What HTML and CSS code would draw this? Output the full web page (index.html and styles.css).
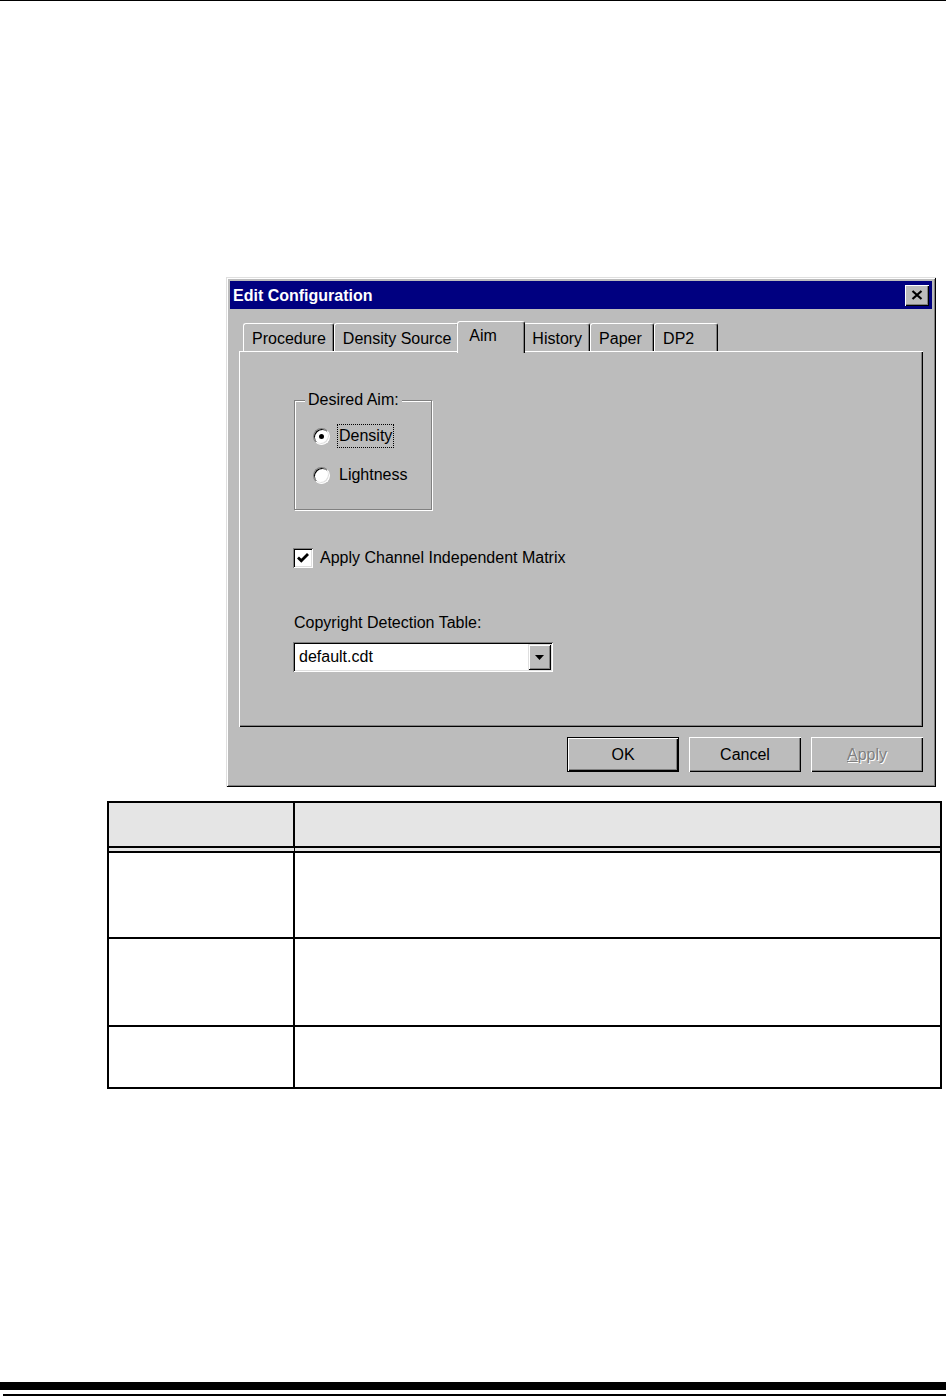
FILE: index.html
```html
<!DOCTYPE html>
<html>
<head>
<meta charset="utf-8">
<title>Edit Configuration</title>
<link rel="stylesheet" href="styles.css">
</head>
<body>
<div class="page">
  <div class="rule-top"></div>
  <div class="dialog">
    <div class="titlebar">
      <span class="title">Edit Configuration</span>
      <div class="close-btn">
        <svg width="12" height="10" viewBox="0 0 12 10"><path d="M1.5 1 L10.5 9 M10.5 1 L1.5 9" stroke="#000" stroke-width="2.2" fill="none"/></svg>
      </div>
    </div>
    <div class="dlg-body">
      <div class="tabs">
        <div class="tab">Procedure</div>
        <div class="tab">Density Source</div>
        <div class="tab active">Aim</div>
        <div class="tab">History</div>
        <div class="tab">Paper</div>
        <div class="tab">DP2</div>
      </div>
      <div class="panel">
        <fieldset class="group">
          <legend>Desired Aim:</legend>
          <div class="radio-row">
            <span class="radio checked"></span>
            <span class="radio-label focus">Density</span>
          </div>
          <div class="radio-row second">
            <span class="radio"></span>
            <span class="radio-label">Lightness</span>
          </div>
        </fieldset>
        <div class="check-row">
          <span class="checkbox">
            <svg width="16" height="16" viewBox="0 0 16 16"><path d="M3 7.5 L6.3 10.8 L13 4" stroke="#000" stroke-width="2.8" fill="none"/></svg>
          </span>
          <span class="check-label">Apply Channel Independent Matrix</span>
        </div>
        <div class="field-label">Copyright Detection Table:</div>
        <div class="combo">
          <span class="combo-text">default.cdt</span>
          <span class="combo-btn">
            <svg width="9" height="5" viewBox="0 0 9 5"><path d="M0 0 H9 L4.5 5 Z" fill="#000"/></svg>
          </span>
        </div>
      </div>
      <div class="buttons">
        <div class="btn default">OK</div>
        <div class="btn">Cancel</div>
        <div class="btn disabled"><u>A</u>pply</div>
      </div>
    </div>
  </div>

  <div class="grid">
    <div class="cell head c1"></div>
    <div class="cell head c2"></div>
    <div class="cell r1 c1"></div>
    <div class="cell r1 c2"></div>
    <div class="cell r2 c1"></div>
    <div class="cell r2 c2"></div>
    <div class="cell r3 c1"></div>
    <div class="cell r3 c2"></div>
  </div>

  <div class="rule-bottom-thick"></div>
  <div class="rule-bottom-thin"></div>
</div>
</body>
</html>
```

FILE: styles.css
```css
html, body {
  margin: 0;
  padding: 0;
  background: #ffffff;
}

body {
  font-family: "Liberation Sans", Arial, sans-serif;
  font-size: 16px;
  line-height: 18px;
  color: #000;
}

.page {
  width: 946px;
}

.rule-top {
  height: 1px;
  background: #000;
}

/* ---------- dialog ---------- */
.dialog {
  margin: 276px 0 0 226px;
  width: 710px;
  height: 510px;
  box-sizing: border-box;
  padding: 4px;
  background: #bcbcbc;
  box-shadow:
    inset 1px 1px 0 #dfdfdf,
    inset -1px -1px 0 #000,
    inset 2px 2px 0 #fff,
    inset -2px -2px 0 #808080;
}

.titlebar {
  height: 28px;
  background: #000080;
  display: flex;
  align-items: center;
  justify-content: space-between;
  padding: 0 3px 0 3px;
}

.title {
  color: #fff;
  font-weight: bold;
  padding-top: 2px;
}

.close-btn {
  width: 24px;
  height: 21px;
  box-sizing: border-box;
  background: #bcbcbc;
  display: flex;
  align-items: center;
  justify-content: center;
  box-shadow:
    inset 1px 1px 0 #fff,
    inset -1px -1px 0 #000,
    inset -2px -2px 0 #808080;
}

.dlg-body {
  padding: 12px 9px 0 9px;
}

/* ---------- tabs ---------- */
.tabs {
  display: flex;
  align-items: flex-end;
  height: 30px;
  padding-left: 4px;
}

.tab {
  box-sizing: border-box;
  height: 28px;
  min-width: 64px;
  padding: 6px 7px 0 8px;
  border: 1px solid #fff;
  border-right-color: #000;
  border-bottom: none;
  border-radius: 3px 3px 0 0;
  box-shadow: inset -1px 0 0 #808080;
  background: #bcbcbc;
  white-space: nowrap;
}

.tab.active {
  height: 32px;
  min-width: 68px;
  margin: 0 -2px -2px -2px;
  padding: 5px 7px 0 11px;
  position: relative;
  z-index: 1;
}

/* ---------- panel ---------- */
.panel {
  height: 376px;
  box-sizing: border-box;
  padding: 40px 0 0 54px;
  box-shadow:
    inset 1px 1px 0 #fff,
    inset -1px -1px 0 #000,
    inset -2px -2px 0 #808080;
}

.group {
  margin: 0 0 0 1px;
  width: 138px;
  box-sizing: border-box;
  padding: 15px 0 22px 0;
  border: 1px solid #808080;
  box-shadow: inset 1px 1px 0 #fff, 1px 1px 0 #fff;
}

.group legend {
  margin-left: 10px;
  padding: 0 3px;
  background: #bcbcbc;
  line-height: 18px;
}

.radio-row {
  display: flex;
  align-items: center;
  height: 24px;
  padding-left: 18px;
}

.radio-row.second {
  margin-top: 15px;
}

.radio {
  width: 17px;
  height: 17px;
  box-sizing: border-box;
  border-radius: 50%;
  border: 1px solid;
  border-color: #808080 #fff #fff #808080;
  background: #fff;
  box-shadow: inset 1px 1px 0 #000, inset -1px -1px 0 #dfdfdf;
  position: relative;
  flex: none;
}

.radio.checked::after {
  content: "";
  position: absolute;
  left: 5px;
  top: 5px;
  width: 5px;
  height: 5px;
  border-radius: 50%;
  background: #000;
}

.radio-label {
  margin-left: 7px;
  padding: 2px 1px 2px 1px;
  border: 1px solid transparent;
}

.radio-label.focus {
  border: 1px dotted #000;
}

.check-row {
  display: flex;
  align-items: center;
  margin-top: 38px;
  height: 20px;
}

.checkbox {
  width: 20px;
  height: 20px;
  box-sizing: border-box;
  background: #fff;
  display: flex;
  align-items: center;
  justify-content: center;
  box-shadow:
    inset 1px 1px 0 #808080,
    inset -1px -1px 0 #fff,
    inset 2px 2px 0 #000,
    inset -2px -2px 0 #dfdfdf;
  flex: none;
}

.check-label {
  margin-left: 7px;
}

.field-label {
  margin-top: 46px;
  margin-left: 1px;
}

.combo {
  margin-top: 10px;
  width: 260px;
  height: 30px;
  box-sizing: border-box;
  padding: 2px;
  background: #fff;
  display: flex;
  align-items: center;
  box-shadow:
    inset 1px 1px 0 #808080,
    inset -1px -1px 0 #fff,
    inset 2px 2px 0 #000,
    inset -2px -2px 0 #dfdfdf;
}

.combo-text {
  padding-left: 4px;
}

.combo-btn {
  margin-left: auto;
  width: 23px;
  height: 26px;
  box-sizing: border-box;
  background: #bcbcbc;
  display: flex;
  align-items: center;
  justify-content: center;
  box-shadow:
    inset 1px 1px 0 #dfdfdf,
    inset -1px -1px 0 #000,
    inset 2px 2px 0 #fff,
    inset -2px -2px 0 #808080;
}

/* ---------- buttons ---------- */
.buttons {
  display: flex;
  justify-content: flex-end;
  gap: 10px;
  margin-top: 10px;
}

.btn {
  width: 112px;
  height: 35px;
  box-sizing: border-box;
  display: flex;
  align-items: center;
  justify-content: center;
  box-shadow:
    inset 1px 1px 0 #fff,
    inset -1px -1px 0 #000,
    inset -2px -2px 0 #808080;
}

.btn.default {
  border: 1px solid #000;
}

.btn.disabled {
  color: #808080;
  text-shadow: 1px 1px 0 #fff;
}

/* ---------- table ---------- */
.grid {
  margin: 14px 0 0 107px;
  width: 835px;
  box-sizing: border-box;
  border: 2px solid #000;
  display: grid;
  grid-template-columns: 186px 1fr;
}

.cell {
  box-sizing: border-box;
  border-bottom: 2px solid #000;
}

.cell.c1 {
  border-right: 2px solid #000;
}

.cell.head {
  height: 50px;
  background: #e5e5e5;
  border-bottom: 7px double #000;
}

.cell.r1 { height: 86px; }
.cell.r2 { height: 88px; }
.cell.r3 { height: 60px; border-bottom: none; }

/* ---------- bottom rules ---------- */
.rule-bottom-thick {
  margin-top: 293px;
  height: 8px;
  background: #000;
}

.rule-bottom-thin {
  margin: 4px 0 0 3px;
  height: 2px;
  background: #000;
}
```
